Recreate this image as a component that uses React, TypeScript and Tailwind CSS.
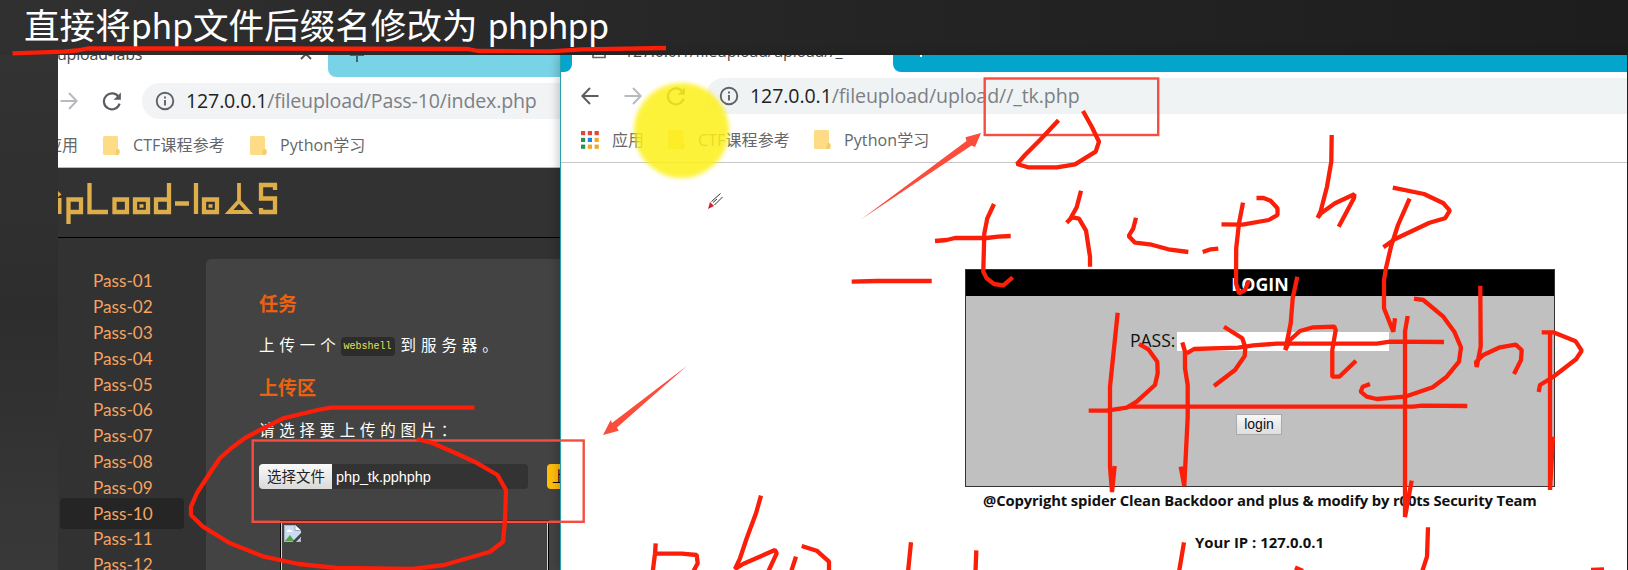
import React from "react";

const passes = ["01", "02", "03", "04", "05", "06", "07", "08", "09", "10", "11", "12"];

const strokes = [
  "M12.5 53.3 L64 51.7 L77 50.5 L87.5 48.5 L250 48.5 L468 49 L478 51 L550 51.3 L582 49.3 L666 48",
  "M474.5 407.7 L331 407.7 L317.6 410 L283 418.3 L264 428 L245 438 L231.5 448 L220 458 L208.6 475 L197 493 L191 506.7 L191 515 L203 526.7 L229.6 543 L264 556.7 L298.5 564 L336.8 568 L413 569 L444 565 L490 551.7 L503 541.7 L505 520 L506 490 L497.5 475 L474.5 461.7 L455.4 453 L432.4 443 L417 439",
  "M1058.5 120.3 L1040 140 L1025 155 L1017 164 L1028 167.3 L1057 167.3 L1075 164.3 L1095.7 151.7 L1099 141.7 L1092 127.3 L1083 111",
  "M851.7 281.7 L877 281 L931.7 281",
  "M935 241 L946.7 240 L955 238 L986.7 238 L998 236.7 L1010.7 236",
  "M994 204 L987.3 218.3 L984.3 233.3 L983.3 271.7 L986.7 278.3 L994 284 L1003.3 285.3 L1012.7 277.3",
  "M1081 190.7 L1076.7 207.3 L1070 219.3 L1066.7 222.7 L1072.3 217.3 L1079 218.7 L1086 230.7 L1090 256.7 L1090 266.7",
  "M1136 217.7 L1133.3 228.3 L1128.7 236 L1135 242.7 L1151.7 244.7 L1168.3 249.3 L1188.3 252",
  "M1202.7 252 L1210.7 249.3 L1218.3 248.7",
  "M1221.5 224.3 L1242.5 224.7 L1268.7 220 L1277.5 215 L1277.5 208.3 L1270.5 200.7 L1263.5 198 L1256.5 198",
  "M1243 202.7 L1239 223.3 L1236.2 248.3 L1236 283.3 L1239 293.3 L1245 290 L1249 280.7",
  "M1331.7 135 L1331.3 161.7 L1327 186.7 L1320.5 211.7 L1317.7 217.7 L1321 213.3 L1335 203.3 L1354.4 194.3 L1354 198 L1338.7 226.7",
  "M1392.8 187.7 L1424 194 L1443.5 203.3 L1449.8 210.7 L1445 218.3 L1429.5 222.7 L1394.6 239.3 L1383.4 247.3",
  "M1409.6 198.7 L1398 225 L1391 246.7 L1386 268 L1384 280 L1384 308.3 L1393.3 331.7 L1395 318.3",
  "M1117.7 312.7 L1110 386.7 L1110 466.7 L1112 492 L1114.7 466",
  "M1088.7 410.7 L1106.7 410.7 L1126.7 407.7 L1136.7 401.7 L1155 385 L1157.7 373.3 L1157.3 361.7 L1148.3 349.3 L1139 344",
  "M1128.3 406.7 L1413.3 406.7 L1421.7 405.7 L1467.3 406",
  "M1182.3 342.3 L1185 351.7 L1185 368.3 L1187.7 385 L1187.7 416.7 L1184.3 486 L1180.7 466.7",
  "M1186.7 353.3 L1194 349 L1238.3 347.7 L1253.3 345.3 L1276.7 343.7 L1376.7 343.7 L1390 341.7 L1444 342",
  "M1224 326.7 L1242.3 338.3 L1245.3 347.3 L1244.7 356 L1235 370 L1214 386",
  "M1297.3 276.7 L1292.7 298.3 L1290.7 323.3 L1285.3 350 L1290 340 L1300 331 L1313.3 327.3 L1334.3 326.7 L1335.7 330 L1332.3 350 L1332.3 376.7 L1339.3 376.7 L1356 360.7",
  "M1407.7 316 L1405 331.7 L1405 517 L1411.7 480.7",
  "M1414 298.7 L1423.3 300 L1443.3 316.7 L1454.3 331.7 L1461 347.3 L1459 361.7 L1446.7 376.7 L1432.7 387.3 L1405 396.7 L1376.7 399 L1366.7 396.7 L1360.7 391.7 L1362.7 386.7 L1370 384",
  "M1480.3 285.7 L1480.7 346.7 L1476.7 367 L1476 362 L1483.3 355 L1500 347.3 L1515.7 344.7 L1521.7 350 L1521 360 L1514 374",
  "M1541.7 332.3 L1553.3 332.3 L1575.7 341.3 L1581.7 350.7 L1576 359.3 L1553.3 376.7 L1540 385 L1538.7 392",
  "M1550 334 L1550 490 L1553 436.7",
  "M655.7 543.3 L655 553.5 L652.7 572 M655 553.7 L681.7 553.7 L696.7 555 L697.7 563.3 L693 572",
  "M761 495.7 L756 513.3 L746.7 538.3 L740 558.3 L735 569 L743 564 L775 550 L776.7 553.3 L768 572",
  "M796 556.7 L791 572 M801.7 546 L816.7 550.7 L829 561.7 L829 572",
  "M911 542.3 L908 572 M976.3 550.3 L975.5 572",
  "M1184 542.3 L1179 572 M1295 567.5 L1303 571",
  "M1428 527.3 L1427 556.7 L1422 572 M1591 570 L1604 569.5",
];

function Annotations() {
  return (
    <svg className="pointer-events-none absolute inset-0" width="1628" height="570" viewBox="0 0 1628 570" fill="none">
      <g stroke="#f54e41" strokeWidth="2.4">
        <rect x="984.7" y="78.5" width="173.5" height="56.5" />
        <rect x="252.7" y="440.5" width="331" height="81.3" />
      </g>
      <g fill="#fb4c3c">
        <path d="M861.3 219.3 L966.5 141 L965.5 137.3 L981 133 L975 147 L971.5 145.5 Z" />
        <path d="M687 365.7 L612 423 L610.7 420 L603 435 L618.6 430.7 L617 427.5 Z" />
      </g>
      <g stroke="#fb1e08" strokeWidth="4.3" strokeLinejoin="bevel" strokeLinecap="butt">
        {strokes.map((d) => (
          <path key={d} d={d} />
        ))}
      </g>
      <g>
        <path d="M708 209 L710 202 L714 206 Z" fill="#d8202c" />
        <path d="M711.5 201.5 L720.5 193.5 M714.5 205 L722.5 197 M713 202.5 L717 199" stroke="#333" strokeWidth="1" />
      </g>
    </svg>
  );
}

const Back = ({ className = "" }: { className?: string }) => (
  <svg className={className} width="18" height="18" viewBox="0 0 18 18" fill="none" stroke="currentColor" strokeWidth="2">
    <path d="M17.5 9H1.5M9 1L1.3 9L9 17" />
  </svg>
);

const Forward = ({ className = "" }: { className?: string }) => (
  <svg className={className} width="18" height="18" viewBox="0 0 18 18" fill="none" stroke="currentColor" strokeWidth="2">
    <path d="M.5 9H16.5M9 1L16.7 9L9 17" />
  </svg>
);

const Reload = ({ className = "" }: { className?: string }) => (
  <svg className={className} width="20" height="20" viewBox="0 0 20 20" fill="none" stroke="currentColor" strokeWidth="2.2">
    <path d="M16.8 6.2A8 8 0 1 0 17.6 12.6" />
    <path d="M18.9 1.5V8.8H11.6Z" fill="currentColor" stroke="none" />
  </svg>
);

const Info = () => (
  <svg className="text-[#5f6368]" width="20" height="20" viewBox="0 0 20 20" fill="none" stroke="currentColor" strokeWidth="1.9">
    <circle cx="10" cy="10" r="8.3" />
    <path d="M10 9V14.5M10 5.4V7.4" />
  </svg>
);

const Folder = ({ className = "" }: { className?: string }) => (
  <svg className={className} width="17" height="19" viewBox="0 0 17 19">
    <path d="M0 1.5Q0 0 1.5 0H13.5Q15 0 15 1.5V13L16.5 14V17Q16.5 19 14.5 19H1.5Q0 19 0 17.5Z" fill="#fddc85" />
    <path d="M13 14.5Q13 13 14.7 13Q16.5 13.3 16.5 15V17Q16.5 19 14 19H12.5Z" fill="#f2cd68" />
  </svg>
);

const Apps = () => (
  <svg width="18" height="18" viewBox="0 0 18 18">
    {["#ea4335", "#ea4335", "#ea4335", "#2a9150", "#1a86e8", "#f5a623", "#2a9150", "#f5a623", "#f5a623"].map((c, i) => (
      <rect key={i} x={(i % 3) * 6.8} y={Math.floor(i / 3) * 6.8} width="4.2" height="4.2" fill={c} />
    ))}
  </svg>
);

const Logo = () => (
  <svg width="220" height="44" viewBox="58 182 220 44" fill="none" stroke="#deae4b" strokeWidth="4.3">
    <path d="M59.5 198V214" strokeWidth="4" />
    <path d="M58 191L61.5 194.5L58 197Z" fill="#deae4b" stroke="none" />
    <path d="M68.5 224V199.5H81V212H68.5M89.5 183V212H108" />
    <path d="M114.5 199.5H127V212H114.5ZM135 199.5H148V212H135ZM156 199.5H169V212H156ZM169 199V183" />
    <path d="M175 203.5H189M196 183V214M204 199.5H217V212H204Z" />
    <path d="M239 183V200M239 201L229 212H249Z" strokeWidth="3.8" />
    <path d="M277 185H261V198.5H275V212H259M275 184V190M261 208V213" />
    <path d="M139.5 206H143.5M208.5 206H212.5" strokeWidth="3.5" />
  </svg>
);

function UploadWindow() {
  return (
    <section className="flex w-[502px] shrink-0 flex-col overflow-hidden bg-white">
      <div className="flex h-[22px] shrink-0">
        <div className="flex w-[270px] justify-between overflow-hidden pr-4">
          <span className="-mt-[14px] -ml-px h-7 whitespace-nowrap text-[16px] leading-[27px] tracking-[-0.2px] text-[#45494d]">upload-labs</span>
          <svg className="-mt-[7px]" width="12" height="12" viewBox="0 0 12 12" stroke="#555" strokeWidth="2"><path d="M1 1L11 11M11 1L1 11" /></svg>
        </div>
        <div className="flex-1 overflow-hidden rounded-bl-[8px] bg-[#79d3e6] pl-[22px]">
          <svg className="-mt-[7px]" width="14" height="14" viewBox="0 0 14 14" stroke="#41666f" strokeWidth="2"><path d="M7 0V14M0 7H14" /></svg>
        </div>
      </div>
      <div className="flex h-[48px] shrink-0 items-center">
        <Forward className="ml-[2px] text-[#b7b9bc]" />
        <Reload className="ml-[24px] text-[#5a5d61]" />
        <div className="ml-[20px] flex h-9 flex-1 items-center gap-[11px] rounded-l-full bg-[#f1f3f4] pl-[13px]">
          <Info />
          <span className="whitespace-nowrap text-[19.6px] leading-[36px] tracking-[-0.16px] text-[#7c8085]"><span className="text-[#222]">127.0.0.1</span>/fileupload/Pass-10/index.php</span>
        </div>
      </div>
      <div className="flex h-[43px] shrink-0 items-center whitespace-nowrap border-b border-[#bbb] pb-[2px] text-[16px] text-[#63676b]">
        <span className="-ml-[12px] w-[57px]">应用</span>
        <Folder />
        <span className="ml-[13px] w-[117px] tracking-[0.1px]">CTF课程参考</span>
        <Folder />
        <span className="ml-[13px] tracking-[0.1px]">Python学习</span>
      </div>
      <div className="flex h-[402px] shrink-0 flex-col bg-[#323232]">
        <header className="h-[70px] shrink-0 border-b border-black pt-[14px]"><Logo /></header>
        <div className="flex flex-1 pt-[21px]">
          <nav className="flex w-[148px] shrink-0 flex-col pt-[9px] font-['Lato']">
            {passes.map((n) => (
              <div key={n} className="flex h-[25.8px] shrink-0 items-center">
                <div className={n === "10" ? "ml-[2px] h-[31px] w-[124px] shrink-0 rounded-[4px] bg-[#252525] pl-[33px] text-[17.2px] leading-[31px] text-[#f4a460]" : "ml-[2px] h-[31px] w-[124px] shrink-0 pl-[33px] text-[17.2px] leading-[31px] text-[#f4a460]"}>
                  Pass-{n}
                </div>
              </div>
            ))}
          </nav>
          <main className="flex flex-1 flex-col rounded-tl-[5px] bg-[#434343] pl-[53px] text-white">
            <h2 className="mt-[31px] h-[28px] text-[19px] leading-[28px] font-bold text-[#ea620f]">任务</h2>
            <p className="mt-[16px] flex h-[24px] items-center whitespace-nowrap text-[15.5px] tracking-[4.9px]">
              上传一个
              <code className="mr-[6px] h-[19px] w-[54px] rounded-[4px] bg-[#2c2c2c] text-center font-['Liberation_Mono'] text-[10px] leading-[20px] tracking-normal text-[#e6e05a]">webshell</code>
              到服务器。
            </p>
            <h2 className="mt-[16px] h-[28px] text-[19px] leading-[28px] font-bold text-[#ea620f]">上传区</h2>
            <p className="mt-[16px] h-[24px] whitespace-nowrap text-[15.5px] leading-[24px] tracking-[4.7px]">请选择要上传的图片：</p>
            <div className="mt-[22px] flex h-[25px] shrink-0 overflow-hidden font-['Liberation_Sans','Noto_Sans_CJK_SC',sans-serif] text-[14.5px]">
              <div className="flex w-[269px] shrink-0 items-center overflow-hidden rounded-[4px] bg-[#333]">
                <span className="h-full w-[73px] bg-linear-to-b from-[#fafafa] to-[#d9d9d9] pl-2 leading-[26px] text-[#222]">选择文件</span>
                <span className="pl-1 leading-[26px] tracking-[-0.1px]">php_tk.pphphp</span>
              </div>
              <span className="ml-[19px] h-full w-[40px] shrink-0 rounded-[4px] bg-[#ffbe0c] pl-[5px] leading-[26px] text-black">上传</span>
            </div>
            <div className="mt-[32px] ml-[22px] flex h-[60px] w-[267px] shrink-0 border border-[#d0d0d0] ring-1 ring-black">
              <svg className="mt-[3px] ml-[2px]" width="17" height="17" viewBox="0 0 17 17">
                <path d="M0 0H11L17 5.5V17H0Z" fill="#c9daf5" />
                <path d="M11 0V5.5H17" fill="#fff" stroke="#8b929c" strokeWidth=".8" />
                <path d="M0 17L6 10L11 17Z" fill="#55a047" />
                <path d="M3 6Q4 3 6 5Q9 5 8 7H3Z" fill="#fff" />
                <path d="M8 17L17 8V12L12 17Z" fill="#434343" />
                <path d="M.5 17V.5H11M.5 16.5H9M16.5 12V16.5H14" fill="none" stroke="#aab2bd" />
              </svg>
            </div>
          </main>
        </div>
      </div>
    </section>
  );
}

function LoginWindow() {
  return (
    <section className="relative flex flex-1 flex-col overflow-hidden border-l border-[#27a2b0] bg-white shadow-[-2px_0_9px_rgba(0,0,0,0.22)]">
      <div className="flex h-[17px] shrink-0 justify-between">
        <div className="w-[11px] rounded-br-[8px] bg-[#03a5cc]" />
        <div className="flex flex-1 overflow-hidden pl-[20px]">
          <svg className="-mt-[13px]" width="14" height="17" viewBox="0 0 14 17" fill="none" stroke="#666" strokeWidth="1.7"><path d="M1 1H13V15.5H1Z" /></svg>
          <span className="-mt-[18px] ml-[18px] h-7 text-[16px] leading-[28px] tracking-[-0.2px] whitespace-nowrap text-[#45494d]">127.0.0.1/fileupload/upload//_</span>
        </div>
        <div className="w-[734px] overflow-hidden rounded-bl-[8px] bg-[#03a5cc] pl-[21px]">
          <svg className="-mt-[12px]" width="14" height="14" viewBox="0 0 14 14" stroke="#fff" strokeWidth="2"><path d="M7 0V14M0 7H14" /></svg>
        </div>
      </div>
      <div className="flex h-[48px] shrink-0 items-center">
        <Back className="ml-[20px] text-[#5a5d61]" />
        <Forward className="ml-[25px] text-[#b7b9bc]" />
        <Reload className="ml-[24px] text-[#5a5d61]" />
        <div className="ml-[20px] flex h-9 flex-1 items-center gap-[11px] rounded-l-full bg-[#f0f3f4] pl-[13px]">
          <Info />
          <span className="whitespace-nowrap text-[19.6px] leading-[36px] tracking-[-0.1px] text-[#7c8085]"><span className="text-[#222]">127.0.0.1</span>/fileupload/upload//_tk.php</span>
        </div>
      </div>
      <div className="flex h-[43px] shrink-0 items-center whitespace-nowrap border-b border-[#c6c6c6] pb-[3px] pl-[20px] text-[16px] text-[#63676b]">
        <Apps />
        <span className="ml-[13px] w-[56px]">应用</span>
        <Folder />
        <span className="ml-[13px] w-[116px] tracking-[0.1px]">CTF课程参考</span>
        <Folder />
        <span className="ml-[13px] tracking-[0.1px]">Python学习</span>
      </div>
      <div className="flex flex-col items-center pt-[106px] pl-[332px] pr-0">
        <div className="mr-[1px] flex h-[218px] w-[590px] flex-col items-center self-start ml-[72px] border border-[#333] bg-[#c0c0c0] text-[#111]">
          <div className="h-[26px] w-full bg-black text-center text-[17.8px] leading-[28px] font-bold tracking-[0px] text-white">LOGIN</div>
          <div className="mt-[35px] flex h-[20px] items-center self-start pl-[164px]">
            <span className="w-[47px] text-[17.5px] leading-[18px] whitespace-nowrap tracking-[0px] pb-[2px]">PASS:</span>
            <div className="h-[19px] w-[212px] bg-white" />
          </div>
          <div className="mt-[63px] h-[21px] w-[46px] self-start ml-[270px] border border-[#aaa] bg-linear-to-b from-[#f8f8f8] to-[#dedede] text-center font-['Liberation_Sans'] text-[14px] leading-[19px]">login</div>
        </div>
        <div className="ml-[90px] mt-[1px] self-start whitespace-nowrap text-[14.8px] leading-[24px] font-bold tracking-[-0.13px] text-[#111]">@Copyright spider Clean Backdoor and plus &amp; modify by r00ts Security Team</div>
        <div className="ml-[302px] mt-[18px] self-start whitespace-nowrap text-[14.9px] leading-[24px] font-bold text-[#111]">Your IP : 127.0.0.1</div>
      </div>
      <div className="absolute top-[28px] left-[73px] size-[95px] rounded-full bg-[#fdf018]/85 blur-[2px]" />
    </section>
  );
}

export default function App() {
  return (
    <div className="relative flex h-[570px] w-[1628px] flex-col overflow-hidden bg-[#323232] font-['Open_Sans','Noto_Sans_CJK_SC',sans-serif]">
      <header className="h-[55px] shrink-0 bg-linear-to-r from-[#303030] via-[#262525] to-[#1e1d1d] pl-[24px]">
        <h1 className="font-['Noto_Sans_CJK_SC',sans-serif] text-[35.6px] leading-[48px] whitespace-nowrap text-white">直接将<span className="text-[34px] tracking-[-0.2px]">php</span>文件后缀名修改为<span className="ml-[3px] text-[34px] tracking-[-0.8px]"> phphpp</span></h1>
      </header>
      <div className="flex h-[515px] bg-[#222]">
        <aside className="w-[58px] shrink-0 bg-linear-to-b from-[#333] via-[#2d2d2d] to-[#393939]" />
        <UploadWindow />
        <LoginWindow />
        <div className="w-px shrink-0 bg-[#222]" />
      </div>
      <Annotations />
    </div>
  );
}
